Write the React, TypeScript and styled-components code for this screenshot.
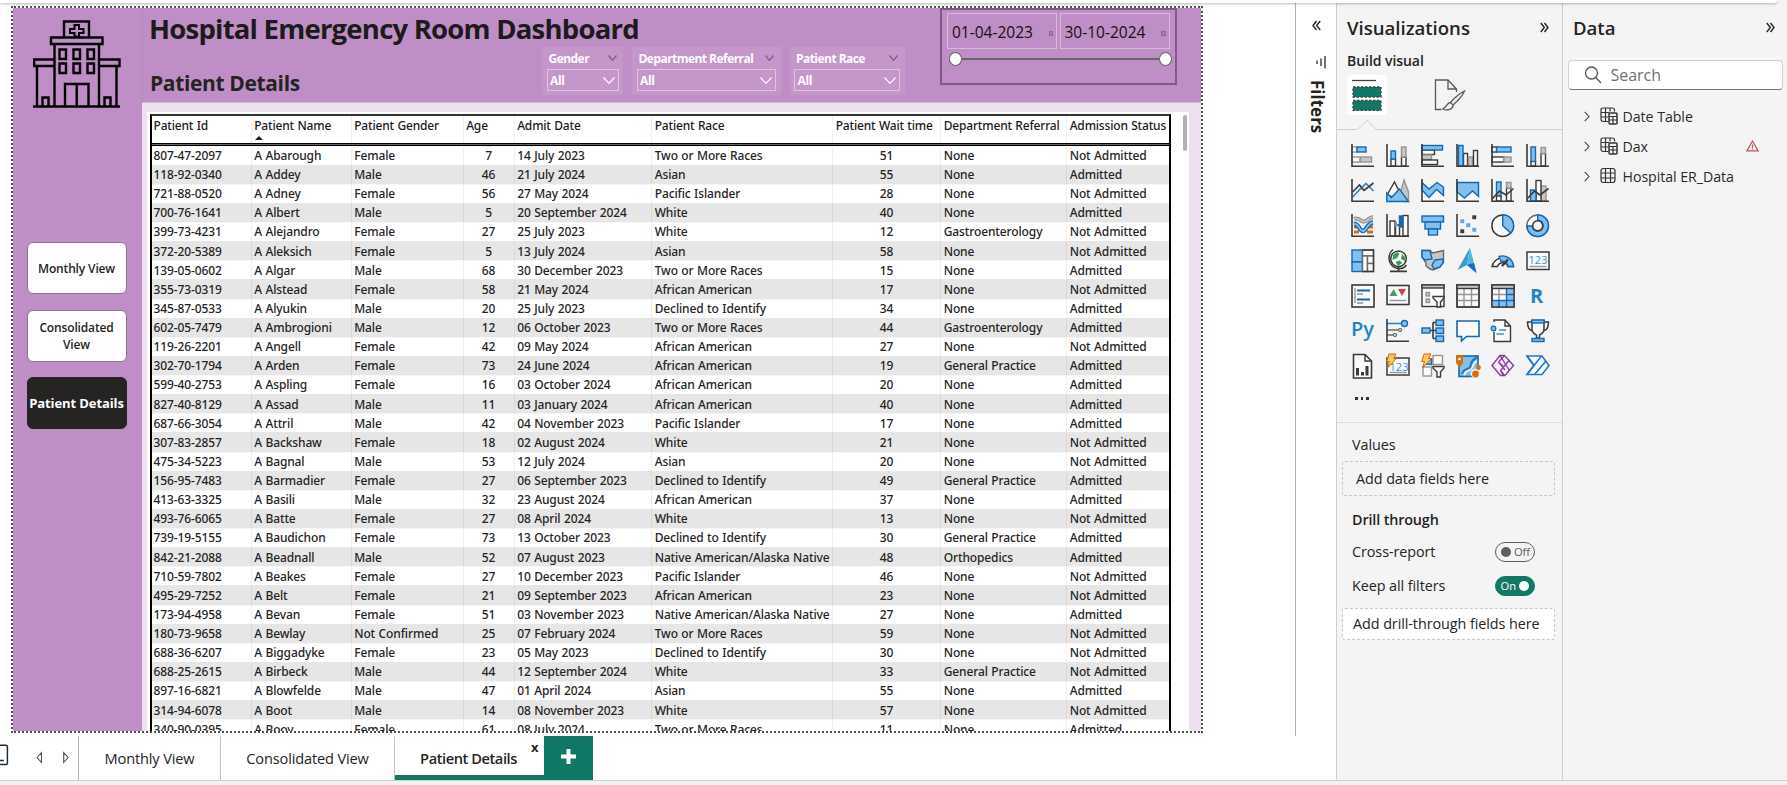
import React from "react";
import styled, { createGlobalStyle, css } from "styled-components";

const PURPLE = "#c08ec6";
const LILAC = "#ede0ef";
const GREEN = "#117865";
const INK = "#252423";

const Global = createGlobalStyle`
  * { box-sizing: border-box; }
  body { margin: 0; background: #fff; font-family: "Open Sans", "Noto Sans", sans-serif; color: ${INK}; }
`;

/* ---------- Shell ---------- */
const Shell = styled.div`
  display: flex; flex-direction: column; width: 1787px; height: 785px; overflow: hidden;
  background: linear-gradient(90deg, #fff 1336px, #f4f4f4 1336px);
`;
const TopStrip = styled.div`
  flex: none; width: 1777px; height: 3px; background: #fff; border-bottom-right-radius: 4px;
  box-shadow: 0 1px 3px rgba(0, 0, 0, 0.28); position: relative; z-index: 2;
`;
const Main = styled.div`display: flex; height: 777px; flex: none;`;
const Footer = styled.div`height: 5px; flex: none; background: #f3f2f2; border-top: 1px solid #cfcfcf;`;
const Workspace = styled.div`width: 1295px; flex: none; display: flex; flex-direction: column;`;
const CanvasArea = styled.div`height: 733px; flex: none; padding: 3px 0 0 11px;`;

/* ---------- Report page ---------- */
const Report = styled.div`
  width: 1192px; height: 727px; border: 2px dotted #4f4f4f; display: flex; overflow: hidden;
  box-shadow: 0 0 12px rgba(0, 0, 0, 0.04);
`;
const Sidebar = styled.aside`
  width: 129px; flex: none; background: ${PURPLE}; display: flex; flex-direction: column; align-items: center;
  padding: 12px 2px 0 0;
`;
const NavButtons = styled.nav`display: flex; flex-direction: column; gap: 15.6px; margin-top: 134px; width: 100px;`;
const NavButton = styled.button<{ $active?: boolean }>`
  height: 52px; padding: 0; border-radius: 6px; border: 1px solid ${p => (p.$active ? "#252423" : "#8d7391")};
  background: ${p => (p.$active ? "#252423" : "#fff")}; color: ${p => (p.$active ? "#fff" : INK)};
  font: ${p => (p.$active ? "700 13px/17px" : "600 12px/17px")} "Open Sans", sans-serif;
  letter-spacing: ${p => (p.$active ? "-0.1px" : "-0.15px")}; white-space: nowrap;
`;
const Content = styled.div`flex: 1; display: flex; flex-direction: column; background: ${LILAC}; min-width: 0;`;
const Header = styled.header`
  height: 95px; flex: none; background: ${PURPLE}; border-bottom: 1px solid #d6b4da; border-left: 1px solid #b988c0;
  display: flex;
`;
const HeaderLeft = styled.div`width: 797px; flex: none; display: flex; flex-direction: column;`;
const Title = styled.h1`
  margin: 0; height: 38.5px; padding-left: 6px; font-size: 27.5px; line-height: 42px; font-weight: 700;
  letter-spacing: -0.78px; color: #1c1b1b; white-space: nowrap;
`;
const SubRow = styled.div`display: flex;`;
const Subtitle = styled.h2`
  margin: 0; width: 399px; padding: 21px 0 0 7px; font-size: 21px; line-height: 30px; font-weight: 700;
  letter-spacing: -0.36px; white-space: nowrap;
`;
const Slicers = styled.div`display: flex; gap: 9px;`;
const SlicerCard = styled.div<{ $w: number }>`
  width: ${p => p.$w}px; height: 48.5px; background: #c496ca; padding: 1.5px 4.5px 0; color: #fff;
`;
const SlicerLabel = styled.div`
  display: flex; align-items: center; justify-content: space-between; height: 21px; padding: 0 2px 1px 2px;
  font-size: 12px; font-weight: 700; letter-spacing: -0.54px; white-space: nowrap;
`;
const SlicerBox = styled.div`
  display: flex; align-items: center; justify-content: space-between; height: 22px; padding: 1px 3px 0 2.5px;
  border: 1px solid #dfc3e2; font-size: 12px; font-weight: 700; letter-spacing: -0.3px;
`;
const DateCard = styled.div`
  width: 237px; height: 77px; border: 2px solid #7d5c84; padding: 3px 5px 0;
`;
const DateInputs = styled.div`display: flex; gap: 2.5px;`;
const DateInput = styled.div`
  width: 110px; height: 36px; border: 1px solid #d9b9dd; display: flex; align-items: center; justify-content: space-between;
  padding: 1px 3px 0 4px; font-size: 15.5px; letter-spacing: 0; color: #111;
`;
const DateGlyph = styled.i`width: 4.5px; height: 5px; margin-top: 4px; border: 1px solid #8a6a90; background: #a77fae;`;
const Slider = styled.div`display: flex; align-items: center; margin: 3px 0 0 2px; width: 223px;`;
const Handle = styled.i`width: 13px; height: 14px; border-radius: 50%; background: #fff; border: 1px solid #666; flex: none;`;
const Track = styled.i`flex: 1; height: 2px; background: #6b6270;`;

/* ---------- Table ---------- */
const TableCard = styled.div`
  margin: 9px 12px 0 5px; flex: 1; min-height: 0; background: #fff; padding: 2px 0 0 3px; display: flex; overflow: hidden;
`;
const Table = styled.div`
  width: 1021px; flex: none; border: solid #000; border-width: 0 2px; border-top: 2px solid #333;
  font: 500 12px/16px "Noto Sans", sans-serif; letter-spacing: -0.12px; word-spacing: 0.5px;
`;
const rowGrid = css`
  display: grid; grid-template-columns: 99.5px 100px 112px 51px 137.5px 181px 108px 126px 102px;
`;
const HeadRow = styled.div`
  ${rowGrid} height: 30px; border-bottom: 3px double #000; color: #1c1b1b; letter-spacing: -0.18px;
  background: linear-gradient(#fff, #fff) padding-box, linear-gradient(#666, #666) border-box;
`;
const BodyRow = styled.div<{ $alt: boolean; $first: boolean }>`
  ${rowGrid} height: ${p => (p.$first ? 18.7 : 19.13)}px; background: ${p => (p.$alt ? "#e6e6e6" : "#fff")};
  border-top: 1px solid ${p => (p.$alt ? "#e6e6e6" : "#f6f6f6")};
`;
const Cell = styled.div<{ $first?: boolean; $center?: boolean; $head?: boolean }>`
  padding: ${p => (p.$head ? "2px" : "1.4px")} 0 0 ${p => (p.$center ? "0" : p.$first ? "1.5px" : "2.7px")};
  text-align: ${p => (p.$center ? "center" : "left")};
  white-space: nowrap; border-right: 1px solid rgba(0, 0, 0, 0.06);
  &:last-child { border-right: 0; }
`;
const SortMark = styled.i`
  display: block; width: 0; height: 0; border: solid transparent; border-width: 0 4px 4px; border-bottom-color: #1c1b1b; margin: 2px 0 0 1px;
`;
const ScrollThumb = styled.i`width: 4px; height: 36px; border-radius: 2px; background: #b1b1b1; margin: 1px 0 0 11.5px;`;

/* ---------- Page tabs ---------- */
const Tabs = styled.div`height: 44px; display: flex;`;
const TabNav = styled.div`
  width: 79px; border-right: 1px solid #b5b5b5; display: flex; align-items: center; flex: none;
`;
const Tab = styled.div<{ $w: number; $active?: boolean }>`
  width: ${p => p.$w}px; flex: none; display: flex; justify-content: center; padding-top: 11px;
  border-right: 1px solid #c3c3c3; font-size: 14.6px; line-height: 22px; position: relative;
  letter-spacing: -0.15px; white-space: nowrap;
  ${p => p.$active && css`
    border-bottom: 5px solid ${GREEN}; font-weight: 600; letter-spacing: -0.42px; border-right: 0; padding-right: 2px;
  `}
`;
const TabClose = styled.span`
  position: absolute; right: 6px; top: 1px; font-size: 13px; line-height: 20px; font-weight: 700;
`;
const AddTab = styled.div`width: 49px; background: ${GREEN}; display: flex; align-items: center; justify-content: center; padding-bottom: 4px;`;

/* ---------- Side panes ---------- */
const FiltersPane = styled.div`
  width: 41px; height: 733px; flex: none; border-left: 1px solid #b3b0ad; display: flex; flex-direction: column; align-items: center;
  padding: 17px 0 0 1px;
`;
const FilterMark = styled.div`margin: 25px 0 0 7px; height: 13px; display: flex;`;
const FiltersLabel = styled.div`
  writing-mode: vertical-rl; font-size: 17px; line-height: 22px; font-weight: 700; margin: 11px 0 0 0; letter-spacing: 0;
`;
const VizPane = styled.div`width: 227px; flex: none; background: #f4f4f4; border: solid #cfcfcf; border-width: 0 1px;`;
const DataPane = styled.div`flex: 1; background: #f4f4f4; padding: 0 4px 0 5px;`;
const PaneHead = styled.div<{ $l: number; $r: number }>`
  display: flex; align-items: center; justify-content: space-between; height: 50px; padding: 0 ${p => p.$r}px 2px ${p => p.$l}px;
  font-size: 18.6px; font-weight: 600; letter-spacing: -0.02px;
`;
const BuildLabel = styled.div`padding-left: 10px; font-size: 14px; line-height: 18px; font-weight: 600; letter-spacing: -0.05px; margin-top: -1px;`;
const ModeRow = styled.div`display: flex; padding: 5px 0 0 10px; height: 51px;`;
const ModeTile = styled.div<{ $active?: boolean }>`
  width: 40px; height: 40px; border-radius: 4px; background: ${p => (p.$active ? "#fff" : "transparent")};
  display: flex; align-items: center; justify-content: center; margin-right: 43px;
`;
const NotchLine = styled.svg`display: block; margin-top: -2px;`;
const IconGrid = styled.div`
  display: grid; grid-template-columns: repeat(6, 24px); grid-auto-rows: 24px; gap: 11px; padding: 13px 0 0 13.5px;
`;
const Dots = styled.div`display: flex; gap: 3px; padding: 19px 0 0 18px; height: 44px; i { width: 2.5px; height: 2.5px; background: #333; }`;
const FieldsBlock = styled.div`border-top: 1px solid #dcdcdc; padding: 12px 7px 0 5px; font-size: 14.4px; line-height: 20px; letter-spacing: -0.08px;`;
const FieldLabel = styled.div<{ $bold?: boolean }>`
  padding-left: 10px; font-weight: ${p => (p.$bold ? 600 : 400)}; margin-top: ${p => (p.$bold ? "14px" : "0")};
  letter-spacing: ${p => (p.$bold ? "-0.15px" : "-0.08px")};
`;
const DropWell = styled.div<{ $solid?: boolean }>`
  border: 1px dashed #c8c6c4; border-radius: 3px; height: ${p => (p.$solid ? 32 : 35)}px; display: flex; align-items: center;
  background: ${p => (p.$solid ? "#fff" : "transparent")}; padding-left: ${p => (p.$solid ? 10 : 13)}px;
  margin-top: ${p => (p.$solid ? 12.500 : 6)}px; white-space: nowrap;
`;
const ToggleRow = styled.div<{ $gap: number }>`
  display: flex; align-items: center; justify-content: space-between; padding: 0 20px 0 10px; height: 20px; margin-top: ${p => p.$gap}px;
`;
const Toggle = styled.div<{ $on?: boolean }>`
  width: 40px; height: 20px; border-radius: 10px; display: flex; align-items: center; gap: 3px;
  flex-direction: ${p => (p.$on ? "row-reverse" : "row")}; padding: 0 5px; justify-content: flex-start;
  font-size: 11.2px; border: 1px solid ${p => (p.$on ? GREEN : "#605e5c")}; color: ${p => (p.$on ? "#fff" : "#605e5c")};
  background: ${p => (p.$on ? GREEN : "transparent")};
  i { width: 10px; height: 10px; border-radius: 50%; background: ${p => (p.$on ? "#fff" : "#605e5c")}; flex: none; }
`;
const SearchBox = styled.div`
  height: 30px; margin-top: 7px; background: #fff; border: 1px solid #d1d1d1; border-bottom-color: #757575; border-radius: 4px;
  display: flex; align-items: center; gap: 9px; padding: 0 15px 0 14.5px; font-size: 16px; color: #707070; letter-spacing: -0.02px;
`;
const FieldList = styled.div`padding: 11px 24px 0 16px; display: flex; flex-direction: column;`;
const FieldRow = styled.div`
  height: 30px; display: flex; align-items: center; font-size: 14.2px; letter-spacing: -0.05px; color: #2b2a29;
  span { margin-left: 5px; flex: 1; }
`;
const Gap = styled.i`width: 9.5px;`;

/* ---------- Drawings ---------- */
const BL = "#1268b3", BF = "#83beec", GL = "#979593", GF = "#c8c6c4", K = "#3b3a39", W = "#fafafa";
const R = ({ x, y, w, h, f = W, s = K, sw = 1.4 }: any) => <rect x={x} y={y} width={w} height={h} fill={f} stroke={s} strokeWidth={sw} />;
const Axis = () => <path d="M1 0V22.2H23" fill="none" stroke={K} strokeWidth="1.6" />;
const L = ({ d, s = K, f = "none", sw = 1.4 }: any) => <path d={d} stroke={s} fill={f} strokeWidth={sw} />;

const Funnel = () => <L d="M12 12.5H23V14L19.5 18V23H16V18L12 14Z" f={W} />;
const Bolt = () => <L d="M3 0H10L7.5 4.5H10.5L1.5 14L3.5 7.5H0.7Z" s="#c86c0a" f="#ffc663" sw={1} />;

const vizIcons: React.ReactNode[] = [
  <><R x={1} y={3} w={5} h={5} s={GL} /><R x={6} y={3} w={9} h={5} f={BF} s={BL} /><R x={1} y={13} w={8} h={5} s={GL} /><R x={9.5} y={13} w={11} h={5} f={GF} s={GL} /><Axis /></>,
  <><R x={5} y={15} w={4.5} h={7} /><R x={5} y={7} w={4.5} h={8} f={BF} s={BL} /><R x={15.5} y={13} w={4.5} h={9} /><R x={15.5} y={3} w={4.5} h={10} f={GF} s={GL} /><Axis /></>,
  <><R x={1} y={6} w={12.5} h={4.5} /><R x={1} y={11} w={9.5} h={4.5} f={GF} s={GL} /><R x={1} y={16} w={15.5} h={4.5} /><R x={1} y={1.5} w={20.5} h={4.5} f={BF} s={BL} /><Axis /></>,
  <><R x={7.5} y={9.5} w={4} h={12.5} /><R x={12.5} y={13} w={4} h={9} f={GF} s={GL} /><R x={17.5} y={6.5} w={4} h={15.5} /><R x={2.5} y={1.5} w={4.5} h={20.5} f={BF} s={BL} /><Axis /></>,
  <><R x={1} y={3} w={5} h={5} /><R x={5.5} y={3} w={14.5} h={5} f={BF} s={BL} /><R x={1} y={13} w={12} h={5} /><R x={13} y={13} w={7} h={5} f={GF} s={GL} /><Axis /></>,
  <><R x={5} y={17} w={4.5} h={5} /><R x={5} y={3} w={4.5} h={14.5} f={BF} s={BL} /><R x={15} y={9.5} w={4.5} h={12.5} /><R x={15} y={3.5} w={4.5} h={6} f={GF} s={GL} /><Axis /></>,
  <><L d="M1.5 18L15 4.5L22.5 12" s="#2e86c1" sw={1.6} /><L d="M1.5 13L8.5 6L13 11.5L22.5 4" sw={1.6} /><Axis /></>,
  <><L d="M12 22L18 1L22.5 13V22.5Z" s={GL} f={GF} /><L d="M1 16L8.5 3L18 22Z" f={W} /><L d="M0.8 14L5.5 18.5L13.5 10L22.5 22.5H0.8Z" s={BL} f={BF} /></>,
  <><L d="M1 10L8 18L15.5 11L22.5 16V22H1Z" s="none" f={W} /><L d="M1 3.5L8 10L16 3.5L22.5 8V16.5L15.5 10.5L8 18.5L1 11Z" s={BL} f={BF} /><Axis /></>,
  <><L d="M1 14L8 20L16 12L22.5 18V22H1Z" s="none" f={W} /><L d="M1 3.5H22.5V17.5L16.5 12L8.5 19L1 13Z" s={BL} f={BF} /><Axis /></>,
  <><R x={5.5} y={3} w={4.5} h={15} f={BF} s={BL} /><R x={5.5} y={17} w={4.5} h={5} /><R x={15.5} y={9} w={4.5} h={13} /><R x={15.5} y={3.5} w={4.5} h={5.5} f={GF} s={GL} /><L d="M1 20L8.5 12L15 16L22.5 9.5" sw={1.6} /><Axis /></>,
  <><R x={15} y={7} w={5} h={15} f={GF} s={GL} /><R x={10} y={1.5} w={5} h={20.5} /><R x={4.5} y={11} w={5.5} h={11} f={BF} s={BL} /><L d="M1 20L8.5 12L14 16L22.5 9.5" sw={1.6} /><Axis /></>,
  <><L d="M3 13H8M3 18H8M16 13H22M16 18H22" s="#d8700a" sw={3} /><L d="M3 5C9 3 9 8 13 7.5S17 4 22 3" s={GL} sw={4} /><L d="M3 5C9 3 9 8 13 7.5S17 4 22 3" s={GF} sw={1.6} /><L d="M3 10C8 9 8 17 12 17S16 9 22 8.5" s={BL} sw={4.4} /><L d="M3 10C8 9 8 17 12 17S16 9 22 8.5" s={BF} sw={1.8} /><Axis /></>,
  <><R x={4} y={7} w={5} h={15} /><R x={9.5} y={11} w={4} h={11} /><R x={17} y={1.5} w={5} h={20.5} /><R x={13.5} y={2} w={3} h={11} f={BL} s={BL} /><L d="M10 8V13" s={GL} sw={2} /><Axis /></>,
  <><R x={1} y={2} w={21.5} h={6} f={BF} s={BL} /><R x={4} y={8} w={15.5} h={7} f={BF} s={BL} /><R x={7.5} y={15} w={9} h={6} f={BF} s={BL} /></>,
  <><R x={5} y={6} w={2.5} h={2.5} f={BF} s="#5aa2dc" /><R x={11} y={10} w={2.5} h={2.5} f={BF} s="#5aa2dc" /><R x={17} y={14.5} w={2.5} h={2.5} f={BF} s="#5aa2dc" /><R x={17} y={2} w={2.5} h={2.5} f={K} /><R x={5} y={16} w={2.5} h={2.5} f={K} /><Axis /></>,
  <><circle cx="11.7" cy="11.7" r="10.8" fill={W} stroke={K} strokeWidth="1.5" /><L d="M11.7 0.9A10.8 10.8 0 0 1 19.7 19L11.7 11.7Z" s={BL} f={BF} /></>,
  <><circle cx="11.7" cy="11.7" r="10.8" fill={W} stroke="#6b6a69" strokeWidth="1.5" /><L d="M11.7 0.9A10.8 10.8 0 1 1 0.9 12H6.2A5.5 5.5 0 1 0 11.7 6.2Z" s={BL} f={BF} /><circle cx="11.7" cy="11.7" r="5" fill="#f4f4f4" stroke={K} strokeWidth="1.4" /></>,
  <><R x={1} y={1} w={10.5} h={12} f={BF} s={BL} /><R x={1} y={13} w={10.5} h={9.5} f={BF} s={BL} /><R x={11.5} y={1} w={11} h={6} s="#6b6a69" /><R x={11.5} y={7} w={5} h={15.5} s="#6b6a69" /><R x={16.5} y={7} w={6} h={7.5} s="#6b6a69" /><R x={16.5} y={14.5} w={6} h={8} s="#6b6a69" /><L d="M11.5 1H22.5V22.5H11.5" /></>,
  <><L d="M7 0.5C2.5 4 1.5 11.500 5.500 16S17 21 20.500 16" sw={1.5} /><circle cx="12.5" cy="9.8" r="7.8" fill="#fff" stroke={K} strokeWidth="1.5" /><path d="M7 6L11 3L13.500 5L11 9L6.500 11ZM16 5L19 8V12L15 10ZM9.500 13L13.500 11.500L16.500 14L12 16.800Z" fill="#2f9e50" /><L d="M12.5 18V22M4 22.3H21" sw={1.8} /></>,
  <><L d="M1 1.500H9L12 4L22.500 1.500V13L19 18L12 21L9 20L5 17V14L1 8Z" f={GF} s="#6b6a69" /><L d="M1 1.500H9L11 10L4 11L1 8Z" s={BL} f={BF} /><L d="M14 11L22 10V14L19 18L13 20L11 16Z" s={BL} f={BF} /></>,
  <><path d="M14 -1.5L1.5 21L11 16Z" fill="#3f9bca" /><path d="M14 -1.5L20.5 24L11 16Z" fill="#52b4d8" /><path d="M11 16L20.5 24L18 14Z" fill="#0f6fc2" /></>,
  <><L d="M1 17.5A11 11 0 0 1 22.5 17.5H17A5.5 5.5 0 0 0 6.5 17.5Z" f={W} sw={1.5} /><L d="M8 7.5A11 11 0 0 1 22.5 17.5H17A5.5 5.5 0 0 0 10 12.5Z" s={BL} f={BF} /><L d="M11 17L17 10.5" sw={2.4} /></>,
  <><R x={1} y={3} w={22} h={17.5} sw={1.5} /><L d="M3.5 17.5H20.5" s={GL} /><text x="12" y="14.5" fontSize="11" textAnchor="middle" fill="#3a94d4" fontFamily="Open Sans">123</text></>,
  <><R x={1} y={1} w={22} h={22} sw={1.6} /><L d="M4 4V19" s={GL} /><L d="M6 6.5H19M6 15.5H19" s={BL} sw={2} /><L d="M6 10H12M6 19H12" s={GL} /></>,
  <><R x={1} y={1.5} w={22} h={19} sw={1.6} /><L d="M3.5 16.5H20" s={GL} /><path d="M3.5 12L7.5 5L11.5 12Z" fill="#43a35c" /><path d="M12 5H20L16 12Z" fill="#dc3f45" /></>,
  <><R x={1} y={1} w={22} h={21.5} /><R x={1} y={1} w={22} h={3} f={GF} /><R x={5} y={8.5} w={3.5} h={3.5} f={GF} s={GL} /><R x={5} y={15} w={3.5} h={3.5} f={GF} s={GL} /><Funnel /></>,
  <><R x={1} y={1} w={22} h={22} /><L d="M1 10.5H23M1 16.5H23M8 4V23M15.5 4V23" s={GL} /><R x={1} y={1} w={22} h={22} f="none" /><R x={1} y={1} w={22} h={3.5} f={GF} /></>,
  <><R x={1} y={1} w={22} h={22} /><path d="M15.5 4H23V23H1V16.5H15.5Z" fill={BF} /><L d="M1 10.5H15.5M8 4V16.5" s={GL} /><L d="M15.5 10.5H23M1 16.5H23M8 16.5V23M15.5 4V23" s={BL} /><R x={1} y={1} w={22} h={22} f="none" /><R x={1} y={1} w={22} h={3.5} f={GF} /></>,
  <text x="10.5" y="18.5" fontSize="20" fontWeight="700" textAnchor="middle" fill="#2385c4" fontFamily="Open Sans">R</text>,
  <text x="11.5" y="16.5" fontSize="20" fontWeight="600" textAnchor="middle" fill="#2385c4" fontFamily="Open Sans">Py</text>,
  <><L d="M1 4.5H16" s="#2e86c1" sw={1.6} /><circle cx="18.5" cy="4.5" r="3" fill={BF} stroke={BL} strokeWidth="1.4" /><L d="M1 11H13M1 16H8" s="#6b6a69" /><circle cx="14" cy="11" r="1.7" fill={GF} stroke="#6b6a69" /><circle cx="9" cy="16" r="1.7" fill={GF} stroke="#6b6a69" /><Axis /></>,
  <><L d="M9 11.5H15M12 3.5V19.5M12 3.5H15M12 19.5H15" sw={1.6} /><R x={1} y={9} w={8} h={5} f={BF} s={BL} /><R x={15} y={1} w={7.5} h={5.5} f={BF} s={BL} /><R x={15} y={9} w={7.5} h={5.5} f={BF} s={BL} /><R x={15} y={17} w={7.5} h={5.5} f={BF} s={BL} /></>,
  <L d="M1 2H23V17.5H10.5L5.5 22V17.5H1Z" s={BL} f={W} sw={1.6} />,
  <><L d="M3 6V1H14L19.5 7V22.5H3V13" f={W} s="none" /><L d="M3 3V1H14L19.5 7V22.5H3V13M14 1V7H19.5" /><circle cx="2.5" cy="9.5" r="2.3" fill={BF} stroke={BL} strokeWidth="1.3" /><L d="M8 11H15M5.5 15H13" s="#3a94d4" /></>,
  <><L d="M6 3H1.5C1.5 8 3 11.5 7 12M18 3H22.5C22.5 8 21 11.5 17 12" sw={1.5} /><L d="M6 1.5H18V10C18 14 15 15 13.5 16V19H10.5V16C9 15 6 14 6 10Z" f={W} sw={1.5} /><R x={6} y={1} w={12} h={3} f={BF} s={BL} /><R x={6} y={19.5} w={12} h={3} f={BF} s={BL} /></>,
  <><L d="M2.5 0.5H14L20.5 7V24H2.5Z" f={W} sw={1.6} /><L d="M14 0.5V7H20.5" /><path d="M5 14H8V21.5H5ZM10 18H13V21.5H10ZM14.5 12H17.5V21.5H14.5Z" fill={K} /></>,
  <><R x={1} y={4} w={22} h={17} sw={1.5} /><L d="M3.5 18.5H20.5" s={GL} /><text x="13" y="16.5" fontSize="11" textAnchor="middle" fill="#3a94d4" fontFamily="Open Sans">123</text><Bolt /></>,
  <><R x={12} y={1.5} w={9.5} h={9} s={GL} /><R x={2} y={13} w={8.5} h={9} s={GL} /><L d="M5 10V5H10.5V10.5Z" f={BF} s={BL} /><Funnel /><Bolt /></>,
  <><R x={3} y={2} w={19} h={20.5} f={BF} s={BL} sw={1.6} /><L d="M6 20C8 13 12 17 14 13S14 7 20 4V1" s="#2b74ad" sw={2} /><L d="M8 21C10 15 14 18 16 14S17 9 21 7" s={W} sw={1.5} /><path d="M0 1H7V9L3.5 13.5L0 9Z" fill="#d8700a" /><circle cx="3.5" cy="5" r="1.3" fill="#fff" /><circle cx="19.5" cy="19.5" r="4.8" fill="#f4f4f4" /><circle cx="22.5" cy="13.5" r="2.4" fill="#d8700a" /><circle cx="19.5" cy="20" r="3.4" fill="#d8700a" /></>,
  <g fill="none" stroke="#8b3da0" strokeWidth="1.4"><path d="M9 1.5H13.5L22.5 11.5L14 21.5H9.5L1 11.5Z" /><path d="M9 1.5L18.5 16.5M13.5 1.5L7.5 8L14 16M18 6.5L9.5 16.5L13.5 21.5M7.5 8L12 12M9.5 16.5L12 21" /></g>,
  <g fill="#fff" stroke="#1479d4" strokeWidth="1.6"><path d="M1 2H16L23 11.5L16 20.5H1L8 11.5Z" /><path d="M1 20.5L15.5 2M8.5 20.5L20 7M1 2L8 11.5" /></g>,
];

const Chev = ({ w = 10, h = 6, c, sw = 1.2 }: { w?: number; h?: number; c: string; sw?: number }) => (
  <svg width={w} height={h} viewBox={`0 0 ${w} ${h}`}><path d={`M.5 .5L${w / 2} ${h - 0.7}L${w - 0.5} .5`} fill="none" stroke={c} strokeWidth={sw} /></svg>
);
const DoubleChev = ({ left }: { left?: boolean }) => (
  <svg width="9" height="11" viewBox="0 0 9 11"><path d={left ? "M4.5 1L1 5.5L4.5 10M8.2 1L4.7 5.5L8.2 10" : "M.8 1L4.3 5.5L.8 10M4.5 1L8 5.5L4.5 10"} fill="none" stroke={INK} strokeWidth="1.4" /></svg>
);
const RowChev = () => (
  <svg width="6" height="11" viewBox="0 0 6 11"><path d="M.7 .8L5 5.5L.7 10.2" fill="none" stroke="#444" strokeWidth="1.1" /></svg>
);
const Hospital = () => (
  <svg width="88" height="88" viewBox="0 0 88 88" fill="none" stroke="#000" strokeWidth="2.4">
    <path d="M31 17V1.500H56V17M18 17.500H69.500V24H18ZM21.500 24V86M66 24V86M21.500 39.500H1.200V46H21.500M66 39.500H86.500V46H66M4 46V86M83.500 46V86M0 86.500H87" />
    <path d="M41.500 5H46V9H50.500V13H46V16.500H41.500V13H37V9H41.500Z" strokeWidth="2" />
    <path d="M26.500 29.500H33V39H26.500ZM40.500 29.500H47V39H40.500ZM54.500 29.500H61V39H54.500ZM26.500 43.500H33V53H26.500ZM40.500 43.500H47V53H40.500ZM54.500 43.500H61V53H54.500Z" />
    <path d="M32 86V64H55.500V86M43.700 64V86M9.500 86V77.500H15.500V86M71.500 86V77.500H77.500V86" />
  </svg>
);
const BuildIcon = () => (
  <svg width="30" height="32" viewBox="0 0 30 32"><path d="M0 1.500H24" stroke="#444" strokeWidth="1.3" /><rect x="1" y="8" width="28" height="10" fill={GREEN} stroke="#444" strokeWidth="1.3" strokeDasharray="2.5 1.5" /><rect x="1" y="21.5" width="28" height="10" fill={GREEN} stroke="#444" strokeWidth="1.3" strokeDasharray="2.5 1.5" /></svg>
);
const FormatIcon = () => (
  <svg width="32" height="32" viewBox="0 0 32 32" fill="none" stroke="#5a5958" strokeWidth="1.3"><path d="M7 30.5H1.5V1H14L22.5 10V13M14 1V10H22.5" /><path d="M30.5 12C26 14 19 20 16.5 23.5L19 26C23 22.5 29 16 30.5 12ZM16.5 23.5C12.5 23.5 13 28.5 8.5 30C13 32 19.5 30.5 19 26" /></svg>
);
const TableIcon = ({ calc }: { calc?: boolean }) => (
  <svg width="18" height="18" viewBox="0 0 18 18" fill="none" stroke="#333" strokeWidth="1.2">
    {calc ? <path d="M8 14.5H3.5Q1 14.5 1 12V3Q1 1 3 1H12Q14.5 1 14.5 3V4.5M1 5.5H9M1 10H8M5.5 1V14.5M10 1V4.5" /> : <path d="M3.5 1.5H12.5Q15 1.5 15 4V13Q15 15.5 12.5 15.5H3.5Q1 15.5 1 13V4Q1 1.5 3.5 1.5ZM1 6H15M1 11H15M5.5 1.5V15.5M10.5 1.5V15.5" />}
    {calc && <><rect x="9" y="6" width="8" height="11" rx="1" fill="#f4f4f4" strokeWidth="1.5" /><path d="M9 9.5H17M9 13H17M13 9.5V17" /></>}
  </svg>
);

/* ---------- Data ---------- */
const columns = ["Patient Id", "Patient Name", "Patient Gender", "Age", "Admit Date", "Patient Race", "Patient Wait time", "Department Referral", "Admission Status"];
const data = `807-47-2097|A Abarough|Female|7|14 July 2023|Two or More Races|51|None|Not Admitted
118-92-0340|A Addey|Male|46|21 July 2024|Asian|55|None|Admitted
721-88-0520|A Adney|Female|56|27 May 2024|Pacific Islander|28|None|Not Admitted
700-76-1641|A Albert|Male|5|20 September 2024|White|40|None|Admitted
399-73-4231|A Alejandro|Female|27|25 July 2023|White|12|Gastroenterology|Not Admitted
372-20-5389|A Aleksich|Female|5|13 July 2024|Asian|58|None|Not Admitted
139-05-0602|A Algar|Male|68|30 December 2023|Two or More Races|15|None|Admitted
355-73-0319|A Alstead|Female|58|21 May 2024|African American|17|None|Not Admitted
345-87-0533|A Alyukin|Male|20|25 July 2023|Declined to Identify|34|None|Admitted
602-05-7479|A Ambrogioni|Male|12|06 October 2023|Two or More Races|44|Gastroenterology|Admitted
119-26-2201|A Angell|Female|42|09 May 2024|African American|27|None|Not Admitted
302-70-1794|A Arden|Female|73|24 June 2024|African American|19|General Practice|Admitted
599-40-2753|A Aspling|Female|16|03 October 2024|African American|20|None|Admitted
827-40-8129|A Assad|Male|11|03 January 2024|African American|40|None|Admitted
687-66-3054|A Attril|Male|42|04 November 2023|Pacific Islander|17|None|Admitted
307-83-2857|A Backshaw|Female|18|02 August 2024|White|21|None|Not Admitted
475-34-5223|A Bagnal|Male|53|12 July 2024|Asian|20|None|Not Admitted
156-95-7483|A Barmadier|Female|27|06 September 2023|Declined to Identify|49|General Practice|Admitted
413-63-3325|A Basili|Male|32|23 August 2024|African American|37|None|Admitted
493-76-6065|A Batte|Female|27|08 April 2024|White|13|None|Not Admitted
739-19-5155|A Baudichon|Female|73|13 October 2023|Declined to Identify|30|General Practice|Admitted
842-21-2088|A Beadnall|Male|52|07 August 2023|Native American/Alaska Native|48|Orthopedics|Admitted
710-59-7802|A Beakes|Female|27|10 December 2023|Pacific Islander|46|None|Not Admitted
495-29-7252|A Belt|Female|21|09 September 2023|African American|23|None|Not Admitted
173-94-4958|A Bevan|Female|51|03 November 2023|Native American/Alaska Native|27|None|Admitted
180-73-9658|A Bewlay|Not Confirmed|25|07 February 2024|Two or More Races|59|None|Not Admitted
688-36-6207|A Biggadyke|Female|23|05 May 2023|Declined to Identify|30|None|Not Admitted
688-25-2615|A Birbeck|Male|44|12 September 2024|White|33|General Practice|Not Admitted
897-16-6821|A Blowfelde|Male|47|01 April 2024|Asian|55|None|Admitted
314-94-6078|A Boot|Male|14|08 November 2023|White|57|None|Not Admitted
340-90-0395|A Booy|Female|61|08 July 2024|Two or More Races|11|None|Admitted`.split("\n").map(r => r.split("|"));

const slicers = [
  { label: "Gender", w: 81 },
  { label: "Department Referral", w: 148.5 },
  { label: "Patient Race", w: 115 },
];

export default function App() {
  return (
    <Shell>
      <Global />
      <TopStrip />
      <Main>
        <Workspace>
          <CanvasArea>
            <Report>
              <Sidebar>
                <Hospital />
                <NavButtons>
                  <NavButton>Monthly View</NavButton>
                  <NavButton>Consolidated<br />View</NavButton>
                  <NavButton $active>Patient Details</NavButton>
                </NavButtons>
              </Sidebar>
              <Content>
                <Header>
                  <HeaderLeft>
                    <Title>Hospital Emergency Room Dashboard</Title>
                    <SubRow>
                      <Subtitle>Patient Details</Subtitle>
                      <Slicers>
                        {slicers.map(s => (
                          <SlicerCard key={s.label} $w={s.w}>
                            <SlicerLabel>{s.label}<Chev w={9} h={6} c="#7a5a80" /></SlicerLabel>
                            <SlicerBox>All<Chev w={12} h={7} c="#fff" /></SlicerBox>
                          </SlicerCard>
                        ))}
                      </Slicers>
                    </SubRow>
                  </HeaderLeft>
                  <DateCard>
                    <DateInputs>
                      <DateInput>01-04-2023<DateGlyph /></DateInput>
                      <DateInput>30-10-2024<DateGlyph /></DateInput>
                    </DateInputs>
                    <Slider><Handle /><Track /><Handle /></Slider>
                  </DateCard>
                </Header>
                <TableCard>
                  <Table>
                    <HeadRow>
                      {columns.map((c, i) => (
                        <Cell key={c} $head $first={i === 0}>{c}{i === 1 && <SortMark />}</Cell>
                      ))}
                    </HeadRow>
                    {data.map((r, ri) => (
                      <BodyRow key={r[0]} $alt={ri % 2 === 1} $first={ri === 0}>
                        {r.map((v, i) => <Cell key={i} $first={i === 0} $center={i === 3 || i === 6}>{v}</Cell>)}
                      </BodyRow>
                    ))}
                  </Table>
                  <ScrollThumb />
                </TableCard>
              </Content>
            </Report>
          </CanvasArea>
          <Tabs>
            <TabNav>
              <svg width="79" height="44" viewBox="0 0 79 44" fill="none" stroke="#555" strokeWidth="1.1">
                <path d="M-2 9H6Q7.500 9 7.500 10.500V27Q7.500 28.500 6 28.500H-2M0 24.500H4" stroke="#1b2a3d" strokeWidth="1.5" />
                <path d="M42 16.500V26.500L37.500 21.500ZM64.500 16.500V26.500L69 21.500Z" />
              </svg>
            </TabNav>
            <Tab $w={142}>Monthly View</Tab>
            <Tab $w={174}>Consolidated View</Tab>
            <Tab $w={149} $active>Patient Details<TabClose>x</TabClose></Tab>
            <AddTab><svg width="15" height="15" viewBox="0 0 15 15"><path d="M7.5 0V15M0 7.5H15" stroke="#fff" strokeWidth="4" /></svg></AddTab>
          </Tabs>
        </Workspace>
        <FiltersPane>
          <DoubleChev left />
          <FilterMark><svg width="11" height="13" viewBox="0 0 11 13"><path d="M10 0V12.5M6 2.5V10M2 4.5V8" stroke="#444" strokeWidth="1.5" /></svg></FilterMark>
          <FiltersLabel>Filters</FiltersLabel>
        </FiltersPane>
        <VizPane>
          <PaneHead $l={10} $r={13}>Visualizations<DoubleChev /></PaneHead>
          <BuildLabel>Build visual</BuildLabel>
          <ModeRow>
            <ModeTile $active><BuildIcon /></ModeTile>
            <ModeTile><FormatIcon /></ModeTile>
          </ModeRow>
          <NotchLine width="225" height="12" viewBox="0 0 225 12"><path d="M0 10.5H20.5L30 1.5L39.5 10.5H225" fill="none" stroke="#cfcfcf" /></NotchLine>
          <IconGrid>
            {vizIcons.map((icon, i) => <svg key={i} width="24" height="24" viewBox="0 0 24 24" overflow="visible">{icon}</svg>)}
          </IconGrid>
          <Dots><i /><i /><i /></Dots>
          <FieldsBlock>
            <FieldLabel>Values</FieldLabel>
            <DropWell>Add data fields here</DropWell>
            <FieldLabel $bold>Drill through</FieldLabel>
            <ToggleRow $gap={12}>Cross-report<Toggle><i />Off</Toggle></ToggleRow>
            <ToggleRow $gap={13.5}>Keep all filters<Toggle $on><i />On</Toggle></ToggleRow>
            <DropWell $solid>Add drill-through fields here</DropWell>
          </FieldsBlock>
        </VizPane>
        <DataPane>
          <PaneHead $l={5} $r={8}>Data<DoubleChev /></PaneHead>
          <SearchBox>
            <svg width="18" height="18" viewBox="0 0 18 18" fill="none" stroke="#555" strokeWidth="1.3"><circle cx="7.5" cy="7" r="6" /><path d="M11.8 11.5L17 17" /></svg>
            Search
          </SearchBox>
          <FieldList>
            <FieldRow><RowChev /><Gap /><TableIcon calc /><span>Date Table</span></FieldRow>
            <FieldRow>
              <RowChev /><Gap /><TableIcon calc /><span>Dax</span>
              <svg width="13" height="12" viewBox="0 0 13 12" fill="none" stroke="#c94a4f" strokeWidth="1.2"><path d="M6.5 1L12 10.8H1ZM6.5 4.5V7.7M6.5 8.5V9.6" /></svg>
            </FieldRow>
            <FieldRow><RowChev /><Gap /><TableIcon /><span>Hospital ER_Data</span></FieldRow>
          </FieldList>
        </DataPane>
      </Main>
      <Footer />
    </Shell>
  );
}
